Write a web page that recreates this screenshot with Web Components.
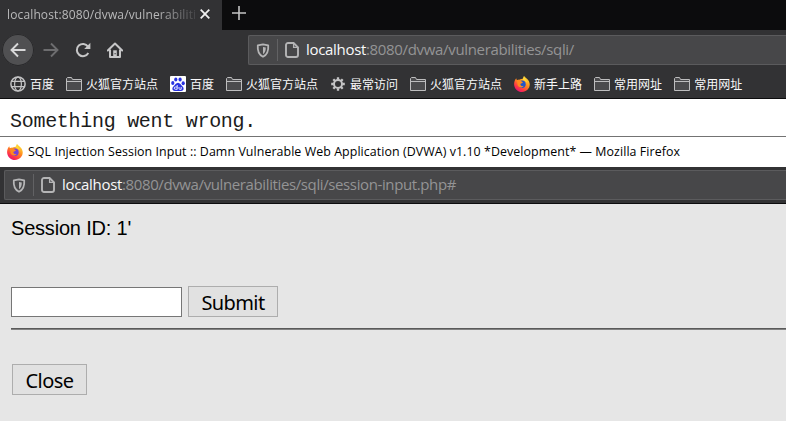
<!DOCTYPE html>
<html lang="zh">
<head>
<meta charset="utf-8">
<title>Session input</title>
<style>
html,body{margin:0;height:421px;overflow:hidden;background:#e6e6e6}
</style>
</head>
<body>
<app-desktop></app-desktop>
<script>
const define=(name,html)=>customElements.define(name,class extends HTMLElement{
  constructor(){super();this.attachShadow({mode:'open'}).innerHTML=typeof html==='function'?html(this):html;}
});

/* One line of text, tracked so that it fills the width given in "w". */
customElements.define('fit-text',class extends HTMLElement{
  connectedCallback(){
    if(this.shadowRoot)return;
    this.attachShadow({mode:'open'}).innerHTML='<style>:host{display:block;white-space:pre;flex:none}span{display:inline-block}</style><span><slot></slot></span>';
    const s=this.shadowRoot.querySelector('span'),w=+this.getAttribute('w');
    const n=this.textContent.length;
    s.style.letterSpacing=((w-s.getBoundingClientRect().width)/n)+'px';
  }
});

const svg=(w,h,vb,body)=>`<svg width="${w}" height="${h}" viewBox="${vb}" fill="none">${body}</svg>`;
const icons={
  close:svg(12,12,'0 0 12 12','<path d="M1.7 1.7 10.3 10.3M10.3 1.7 1.7 10.3" stroke="#f0f0f0" stroke-width="1.8"/>'),
  plus:svg(14,14,'0 0 14 14','<path d="M7 0V14M0 7H14" stroke="#c4c4c4" stroke-width="1.6"/>'),
  back:svg(16,16,'0 0 16 16','<path d="M15.5 8H1.5M8 1.5 1.5 8 8 14.5" stroke="#d8d8d9" stroke-width="1.9"/>'),
  forward:svg(16,16,'0 0 16 16','<path d="M.5 8H14.5M8 1.5 14.5 8 8 14.5" stroke="#6d6d6f" stroke-width="1.9"/>'),
  reload:svg(16,16,'0 0 16 16','<path d="M13.3 11A6.1 6.1 0 1 1 13 4.6" stroke="#c6c6c7" stroke-width="2"/><path d="M15.4.8V7H9.2Z" fill="#c6c6c7"/>'),
  home:svg(16,16,'0 0 16 16','<path d="M.8 8.5 8 1.5 15.2 8.5" stroke="#c6c6c7" stroke-width="2" stroke-linejoin="round" stroke-linecap="round"/><path d="M3 7.5V15H13V7.5" stroke="#c6c6c7" stroke-width="2" stroke-linejoin="round"/><path d="M6.2 8.3H9.8V14.5H6.2Z" fill="#c6c6c7"/><path d="M7.6 11h1v1.3h-1z" fill="#323234"/>'),
  shield:svg(14,15,'0 0 14 15','<path d="M7 1.3 12.2 2.4C12.7 8 10.8 12 7 13.8 3.2 12 1.3 8 1.8 2.4Z" stroke="#b5b5b6" stroke-width="1.8" stroke-linejoin="round"/><path d="M7 4 9.8 4.6C9.8 7.8 9 9.8 7 11.2Z" fill="#b5b5b6"/>'),
  page:svg(14,16,'0 0 14 16','<path d="M3 1H8.6L13 5.4V13a2 2 0 0 1-2 2H3a2 2 0 0 1-2-2V3a2 2 0 0 1 2-2Z" stroke="#b5b5b6" stroke-width="1.9"/><path d="M8.6 1V5.4H13" stroke="#b5b5b6" stroke-width="1.3"/>'),
  globe:svg(16,16,'0 0 16 16','<circle cx="8" cy="8" r="7.1" stroke="#c4c4c5" stroke-width="1.5"/><ellipse cx="8" cy="8" rx="3.4" ry="7" stroke="#c4c4c5" stroke-width="1.2"/><path d="M1.5 5.3H14.5M1.5 10.7H14.5" stroke="#c4c4c5" stroke-width="1.2"/>'),
  folder:svg(16,14,'0 0 16 14','<path d="M.5 13.5V1.5L1.5.5H5.5L6.5 2.5H15.5V13.5Z" fill="#4b4b4d" stroke="#bdbdbe"/><path d="M1 4.5H15" stroke="#bdbdbe"/>'),
  gear:svg(14,14,'0 0 14 14','<circle cx="7" cy="7" r="4" stroke="#c4c4c5" stroke-width="2"/><path d="M7 .2V2.6M7 11.4V13.8M.2 7H2.6M11.4 7H13.8M2.3 2.3 4 4M10 10 11.7 11.7M2.3 11.7 4 10M10 4 11.7 2.3" stroke="#c4c4c5" stroke-width="2.3"/>'),
  paw:svg(16,16,'0 0 16 16','<rect width="16" height="16" rx="1" fill="#fff"/><g fill="#2932e1"><ellipse cx="2.8" cy="7" rx="1.6" ry="2"/><ellipse cx="5.8" cy="3.5" rx="1.6" ry="2.1"/><ellipse cx="10.1" cy="3.5" rx="1.6" ry="2.1"/><ellipse cx="13.2" cy="7.2" rx="1.6" ry="2"/><path d="M8 6.7C10 6.7 10.8 9 12.6 10.6 14.5 12.5 13.5 15 11.2 15 9.2 15 6.8 15 4.8 15 2.5 15 1.5 12.5 3.4 10.6 5.2 9 6 6.7 8 6.7Z"/></g><path d="M7.2 9V13.3H5.4a1 1 0 0 1 0-2.3H7M9 11v1.6q0 .7.8.7h1.4V11" stroke="#fff" stroke-width=".9"/>'),
  fox:svg(16,16,'0 0 16 16','<defs><linearGradient id="a" x1="13" y1="1" x2="4" y2="15" gradientUnits="userSpaceOnUse"><stop stop-color="#ffe23a"/><stop offset=".45" stop-color="#ff8a1e"/><stop offset=".8" stop-color="#ff3646"/><stop offset="1" stop-color="#e8186e"/></linearGradient></defs><path d="M10 0C11 1.6 13 2.5 14.3 4.2 16.4 7.2 16.2 11 13.7 13.6 10.5 16.8 5.4 16.7 2.4 13.7-.2 11-.5 7 1 4L2.2 2.2 2.8 4 5.5 3.8C6.5 3.3 8.5 3 9.2 2.6Z" fill="url(#a)"/><circle cx="8" cy="8.2" r="3.7" fill="var(--globe,#7540d8)"/><path d="M2.8 4.4C4.5 3.3 6.5 4 7.6 5.4L9 6.2C8.5 7.3 7.2 7 6.4 7.9 6.2 9.5 8 10.4 9.8 9.7 8 12.5 4.4 11.8 3.6 9Z" fill="#ff8a1e"/><path d="M10 0C10 2.5 13 4 13.3 7L11 4.7 8.6 3.7Z" fill="#ffd83a"/>')
};
define('ui-icon',el=>`<style>:host{display:block;flex:none}svg{display:block}</style>${icons[el.getAttribute('name')]}`);

define('browser-tab',`<style>
:host{display:flex;width:222px;height:30px;background:#323234;color:#b9b9ba;box-sizing:border-box;padding:0 0 2px 7px;align-items:center;font:12px "Open Sans","Noto Sans CJK SC",sans-serif}
div{width:188px;overflow:hidden;-webkit-mask-image:linear-gradient(90deg,#000 150px,transparent 195px);mask-image:linear-gradient(90deg,#000 150px,transparent 195px)}
ui-icon{margin-left:4px}
</style><div><slot></slot></div><ui-icon name="close"></ui-icon>`);

define('tab-strip',`<style>
:host{display:flex;height:30px;background:#0c0c0d;align-items:center;gap:10px;box-sizing:border-box}
ui-icon{margin-bottom:4px}
</style><slot></slot><ui-icon name="plus"></ui-icon>`);

define('url-bar',`<style>
:host{display:flex;box-sizing:border-box;height:30px;border:1px solid #5b5b5d;border-right:0;border-radius:2px 0 0 2px;background:#474749;align-items:center;color:#949495;font:15px "Open Sans","Noto Sans CJK SC",sans-serif}
ui-icon[name=shield]{margin-left:7px}
i{width:1px;height:22px;background:#626264;margin:0 7px 0 7px}
.t{display:flex;margin-left:7px;line-height:20px;height:20px;padding-bottom:2px}
</style><ui-icon name="shield"></ui-icon><i></i><ui-icon name="page"></ui-icon><div class="t"><slot></slot></div>`);

define('nav-bar',`<style>
:host{display:flex;height:40px;align-items:center;box-sizing:border-box;padding-left:2px}
.b{width:32px;height:32px;border-radius:50%;background:#505052;box-shadow:0 0 0 1px #29292b inset;display:grid;place-items:center;margin-right:9px}
slot{display:block;flex:1;margin-left:125px}
.g{display:flex;gap:16px}
</style><div class="b"><ui-icon name="back"></ui-icon></div><div class="g"><ui-icon name="forward"></ui-icon><ui-icon name="reload"></ui-icon><ui-icon name="home"></ui-icon></div><slot></slot>`);

define('book-mark',el=>`<style>
:host{display:flex;align-items:center;gap:4px;height:20px;color:#f9f9fa;font:12px/20px "Noto Sans CJK SC",sans-serif;white-space:nowrap}
.i{width:16px;display:grid;place-items:center}
</style><div class="i"><ui-icon name="${el.getAttribute('icon')}"></ui-icon></div><span><slot></slot></span>`);

define('bookmark-bar',`<style>
:host{display:flex;gap:12px;height:28px;padding:4px 0 0 10px;box-sizing:border-box}
</style><slot></slot>`);

define('title-bar',`<style>
:host{display:flex;height:31px;box-sizing:border-box;border-top:1px solid #737373;background:#fff;align-items:center;gap:5px;padding-left:7px;color:#000;font:12.4px/18px "Open Sans","Noto Sans CJK SC",sans-serif}
</style><ui-icon name="fox"></ui-icon><slot></slot>`);

define('push-button',`<style>
:host{display:block;flex:none}
button{display:flex;justify-content:center;align-items:center;width:100%;height:31px;box-sizing:border-box;border:1px solid #adadad;background:#e1e1e1;color:#000;padding:2px 0 0;margin:0;font:20px/24px "Noto Sans","Open Sans",sans-serif}
</style><button><slot></slot></button>`);

define('session-form',`<style>
:host{display:block;height:217px;background:#e6e6e6;box-sizing:border-box;padding:12px 0 0 11px;color:#000;font:20px/24px "Liberation Sans",Arial,sans-serif}
.row{display:flex;align-items:flex-end;gap:6px;margin-top:46px}
input{box-sizing:border-box;width:171px;height:30px;border:1px solid #767676;background:#fff;margin:0;padding:0;border-radius:0}
.rule{height:1px;background:#5a5a5a;border-bottom:1px solid #828282;margin-top:11px}
.s{width:90px}.c{width:75px;margin:34px 0 0 1px}
</style>
<fit-text w="120">Session ID: 1'</fit-text>
<div class="row"><input><push-button class="s"><fit-text w="63">Submit</fit-text></push-button></div>
<div class="rule"></div>
<push-button class="c"><fit-text w="48">Close</fit-text></push-button>`);

define('app-desktop',`<style>
:host{display:block;width:786px;height:421px;overflow:hidden;background:#e6e6e6}
.chrome{background:#323234;border-bottom:1px solid #0c0c0d;height:98px}
.page{height:37px;background:#fff;color:#1c1c1c;font:20px/24px "Liberation Mono","Courier New",monospace;padding:11px 0 0 10px;box-sizing:border-box}
.bar{height:37px;box-sizing:border-box;background:#323234;border-bottom:1px solid #0c0c0d;padding:3px 0 0 4px}
.h{color:#f9f9fa}
book-mark[icon=fox]{--globe:#2456c8}
</style>
<div class="chrome">
<tab-strip><browser-tab><fit-text w="202">localhost:8080/dvwa/vulnerabilities</fit-text></browser-tab></tab-strip>
<nav-bar><url-bar><fit-text class="h" w="60">localhost</fit-text><fit-text w="208">:8080/dvwa/vulnerabilities/sqli/</fit-text></url-bar></nav-bar>
<bookmark-bar>
<book-mark icon="globe">百度</book-mark><book-mark icon="folder">火狐官方站点</book-mark><book-mark icon="paw">百度</book-mark><book-mark icon="folder">火狐官方站点</book-mark><book-mark icon="gear">最常访问</book-mark><book-mark icon="folder">火狐官方站点</book-mark><book-mark icon="fox">新手上路</book-mark><book-mark icon="folder">常用网址</book-mark><book-mark icon="folder">常用网址</book-mark>
</bookmark-bar>
</div>
<div class="page"><fit-text w="246">Something went wrong.</fit-text></div>
<title-bar><fit-text w="652">SQL Injection Session Input :: Damn Vulnerable Web Application (DVWA) v1.10 *Development* — Mozilla Firefox</fit-text></title-bar>
<div class="bar"><url-bar><fit-text class="h" w="60">localhost</fit-text><fit-text w="334">:8080/dvwa/vulnerabilities/sqli/session-input.php#</fit-text></url-bar></div>
<session-form></session-form>`);
</script>
</body>
</html>
